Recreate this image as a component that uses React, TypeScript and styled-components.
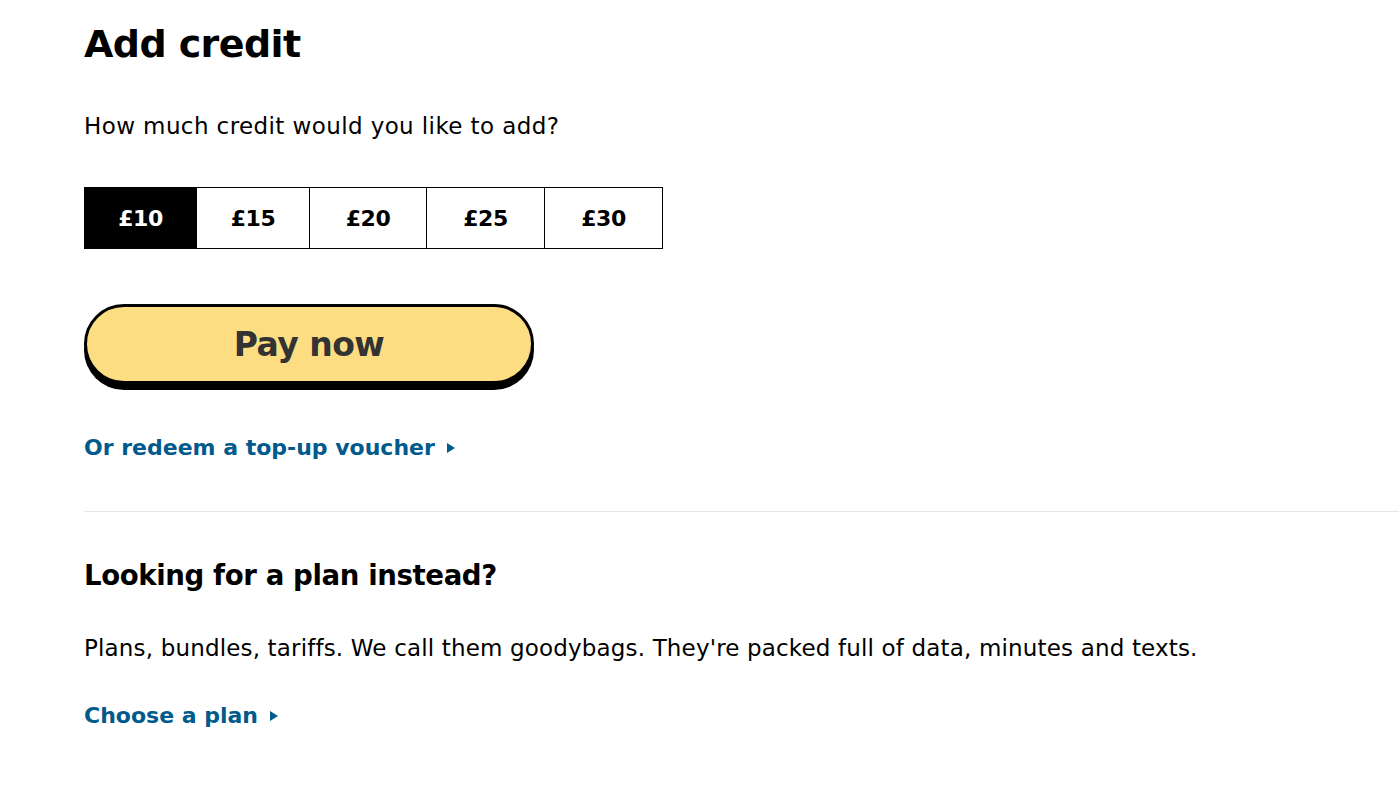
import React, { useState } from "react";
import styled, { createGlobalStyle } from "styled-components";

const GlobalStyle = createGlobalStyle`
  html, body { margin: 0; padding: 0; background: #ffffff; }
  body { font-family: "DejaVu Sans", "Noto Sans", sans-serif; color: #000; }
  * { box-sizing: border-box; }
`;

const Page = styled.main`
  padding: 18px 0 40px 84px;
  display: flex;
  flex-direction: column;
`;

const Title = styled.h1`
  margin: 0;
  font-size: 38px;
  line-height: 52px;
  font-weight: 700;
  letter-spacing: -0.6px;
`;

const Lead = styled.p`
  margin: 40px 0 0;
  font-size: 23px;
  line-height: 32px;
  letter-spacing: 0.4px;
`;

const Amounts = styled.div`
  margin-top: 45px;
  display: flex;
  align-self: flex-start;
`;

const Amount = styled.button<{ $active: boolean; $w: number }>`
  width: ${(p) => p.$w}px;
  height: 62px;
  margin-left: -1px;
  &:first-child { margin-left: 0; }
  border: 1px solid #000;
  background: ${(p) => (p.$active ? "#000" : "#fff")};
  color: ${(p) => (p.$active ? "#fff" : "#000")};
  font-family: inherit;
  font-weight: 700;
  font-size: 22px;
  letter-spacing: -0.4px;
  cursor: pointer;
  padding: 0;
`;

const PayButton = styled.button`
  margin-top: 55px;
  align-self: flex-start;
  width: 450px;
  height: 80px;
  border: 3px solid #000;
  border-radius: 40px;
  background: #fddd82;
  box-shadow: 0 6px 0 #000;
  color: #333333;
  font-family: inherit;
  font-weight: 700;
  font-size: 33px;
  letter-spacing: -0.5px;
  cursor: pointer;
`;

const TextLink = styled.a`
  display: inline-flex;
  align-items: center;
  align-self: flex-start;
  gap: 12px;
  color: #005a8c;
  font-weight: 700;
  font-size: 22px;
  line-height: 30px;
  text-decoration: none;
  cursor: pointer;
`;

const VoucherLink = styled(TextLink)`
  margin-top: 49px;
`;

const Caret = styled.svg`
  width: 8px;
  height: 10px;
  fill: #005a8c;
`;

const Divider = styled.hr`
  margin: 48px 0 0;
  border: 0;
  border-top: 1px solid #e6e6e6;
  width: 100%;
`;

const SubTitle = styled.h2`
  margin: 46px 0 0;
  font-size: 27.6px;
  line-height: 36px;
  font-weight: 700;
  letter-spacing: -0.4px;
`;

const Body = styled.p`
  margin: 38px 0 0;
  font-size: 23px;
  line-height: 32px;
  letter-spacing: 0.16px;
`;

const PlanLink = styled(TextLink)`
  margin-top: 37px;
`;

const Arrow = () => (
  <Caret viewBox="0 0 8 10" aria-hidden>
    <path d="M0 0 L8 5 L0 10 Z" />
  </Caret>
);

const amounts = [
  { v: 10, w: 113 },
  { v: 15, w: 114 },
  { v: 20, w: 118 },
  { v: 25, w: 119 },
  { v: 30, w: 119 },
];

export default function App() {
  const [sel, setSel] = useState(10);
  return (
    <>
      <GlobalStyle />
      <Page>
        <Title>Add credit</Title>
        <Lead>How much credit would you like to add?</Lead>
        <Amounts>
          {amounts.map((a) => (
            <Amount key={a.v} $w={a.w} $active={sel === a.v} onClick={() => setSel(a.v)}>
              £{a.v}
            </Amount>
          ))}
        </Amounts>
        <PayButton>Pay now</PayButton>
        <VoucherLink>
          Or redeem a top-up voucher <Arrow />
        </VoucherLink>
        <Divider />
        <SubTitle>Looking for a plan instead?</SubTitle>
        <Body>
          Plans, bundles, tariffs. We call them goodybags. They're packed full of data, minutes and texts.
        </Body>
        <PlanLink>
          Choose a plan <Arrow />
        </PlanLink>
      </Page>
    </>
  );
}
